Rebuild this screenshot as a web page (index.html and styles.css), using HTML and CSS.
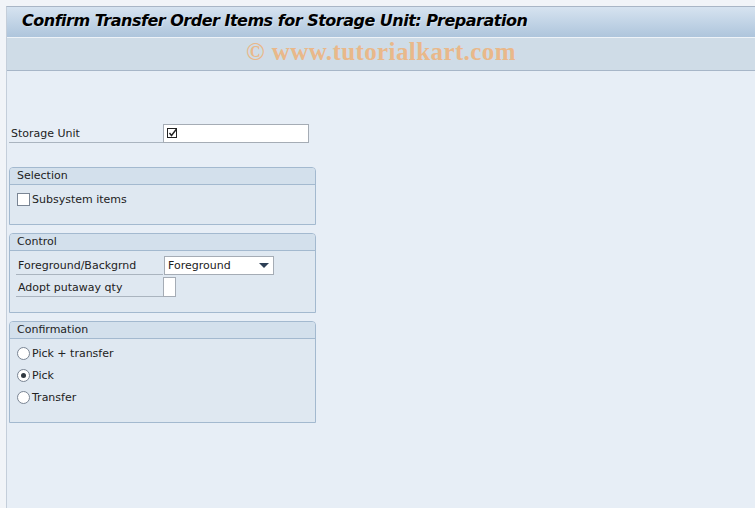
FILE: index.html
```html
<!DOCTYPE html>
<html lang="en">
<head>
    <meta charset="UTF-8">
    <title>Confirm Transfer Order Items for Storage Unit: Preparation</title>
    <link rel="stylesheet" href="styles.css">
</head>
<body>
    <div class="window">
        <!-- Title and watermark band -->
        <div class="title-bar">Confirm Transfer Order Items for Storage Unit: Preparation</div>
        <div class="toolbar"><span class="watermark">&copy; www.tutorialkart.com</span></div>

        <div class="content">
            <div class="field-row top-row">
                <span class="label wide">Storage Unit</span>
                <span class="input su-input">
                    <svg width="11" height="11" viewBox="0 0 11 11">
                        <rect x="0.5" y="0.5" width="9" height="9" fill="none" stroke="#222" stroke-width="1"/>
                        <path d="M2.5 5 L4.5 7.5 L9.5 1" fill="none" stroke="#222" stroke-width="1.4"/>
                    </svg>
                </span>
            </div>

            <!-- Selection -->
            <div class="group group-selection">
                <div class="group-head">Selection</div>
                <div class="group-body">
                    <label class="option"><span class="check"></span>Subsystem items</label>
                </div>
            </div>

            <!-- Control -->
            <div class="group group-control">
                <div class="group-head">Control</div>
                <div class="group-body">
                    <div class="field-row">
                        <span class="label">Foreground/Backgrnd</span>
                        <span class="input dropdown">Foreground<span class="arrow"></span></span>
                    </div>
                    <div class="field-row">
                        <span class="label">Adopt putaway qty</span>
                        <span class="input tiny"></span>
                    </div>
                </div>
            </div>

            <!-- Confirmation -->
            <div class="group group-confirm">
                <div class="group-head">Confirmation</div>
                <div class="group-body">
                    <label class="option"><span class="radio"></span>Pick + transfer</label>
                    <label class="option"><span class="radio on"></span>Pick</label>
                    <label class="option"><span class="radio"></span>Transfer</label>
                </div>
            </div>
        </div>
    </div>
</body>
</html>
```

FILE: styles.css
```css
body {
    margin: 0;
    padding: 0;
    background-color: #f1f4f8;
    font-family: "DejaVu Sans", Tahoma, sans-serif;
    font-size: 11px;
    color: #222222;
    overflow: hidden;
}

.window {
    margin: 6px 0 0 6px;
    height: 502px;
    border-left: 1px solid #c4ceda;
    border-top: 1px solid #a9b6c6;
    background-color: #e7eef6;
    display: flex;
    flex-direction: column;
}

/* Title bar */
.title-bar {
    height: 30px;
    line-height: 28px;
    padding-left: 15px;
    background: linear-gradient(to bottom, #d6e3f0, #aec5dc);
    font-size: 16px;
    font-weight: bold;
    font-style: italic;
    color: #000000;
    letter-spacing: -0.5px;
    text-shadow: 1px 1px 0 rgba(255, 255, 255, 0.35);
}

.toolbar {
    height: 32px;
    border-top: 1px solid #eef3f8;
    border-bottom: 1px solid #a7b6c8;
    background-color: #cfdce7;
    display: flex;
    justify-content: center;
}

.watermark {
    font-family: "Liberation Serif", serif;
    font-weight: bold;
    font-size: 25px;
    line-height: 28px;
    color: #e9b88a;
    letter-spacing: 0.4px;
}

.content {
    padding: 52px 0 0 2px;
    display: flex;
    flex-direction: column;
}

.field-row {
    display: flex;
    align-items: center;
    height: 22px;
}

.top-row {
    height: 20px;
    margin-bottom: 24px;
}

.label {
    width: 147px;
    height: 19px;
    line-height: 20px;
    padding-left: 2px;
    border-bottom: 1px solid #aab4bf;
    box-sizing: border-box;
}

.label.wide {
    width: 154px;
}

.input {
    display: flex;
    align-items: center;
    height: 19px;
    box-sizing: border-box;
    background-color: #ffffff;
    border: 1px solid #a5acb5;
}

.su-input {
    width: 146px;
    padding-left: 3px;
}

.dropdown {
    width: 110px;
    padding: 0 3px;
    justify-content: space-between;
    margin-left: 1px;
}

.arrow {
    width: 0;
    height: 0;
    border-left: 5px solid transparent;
    border-right: 5px solid transparent;
    border-top: 5px solid #2d3e55;
    margin-right: 1px;
}

.tiny {
    width: 13px;
    height: 20px;
}

/* Group boxes */
.group {
    width: 307px;
    box-sizing: border-box;
    border: 1px solid #a3b9cf;
    border-radius: 4px 4px 0 0;
    background-color: #dfe8f1;
    margin-bottom: 8px;
}

.group-head {
    height: 16px;
    line-height: 15px;
    padding-left: 7px;
    background-color: #d3e0ec;
    border-bottom: 1px solid #a3b9cf;
    border-radius: 3px 3px 0 0;
}

.group-body {
    padding: 3px 0 0 6px;
    display: flex;
    flex-direction: column;
}

.group-selection {
    height: 58px;
}

.group-control {
    height: 80px;
}

.group-confirm {
    height: 102px;
}

.option {
    display: flex;
    align-items: center;
    height: 22px;
}

.check {
    width: 11px;
    height: 11px;
    border: 1px solid #7a8594;
    background-color: #ffffff;
    margin: 0 2px 0 1px;
}

.radio {
    width: 11px;
    height: 11px;
    border: 1px solid #7a8594;
    border-radius: 50%;
    background-color: #ffffff;
    margin: 0 2px 0 1px;
    display: flex;
    align-items: center;
    justify-content: center;
}

.radio.on::after {
    content: "";
    width: 5px;
    height: 5px;
    border-radius: 50%;
    background-color: #303840;
}
```
